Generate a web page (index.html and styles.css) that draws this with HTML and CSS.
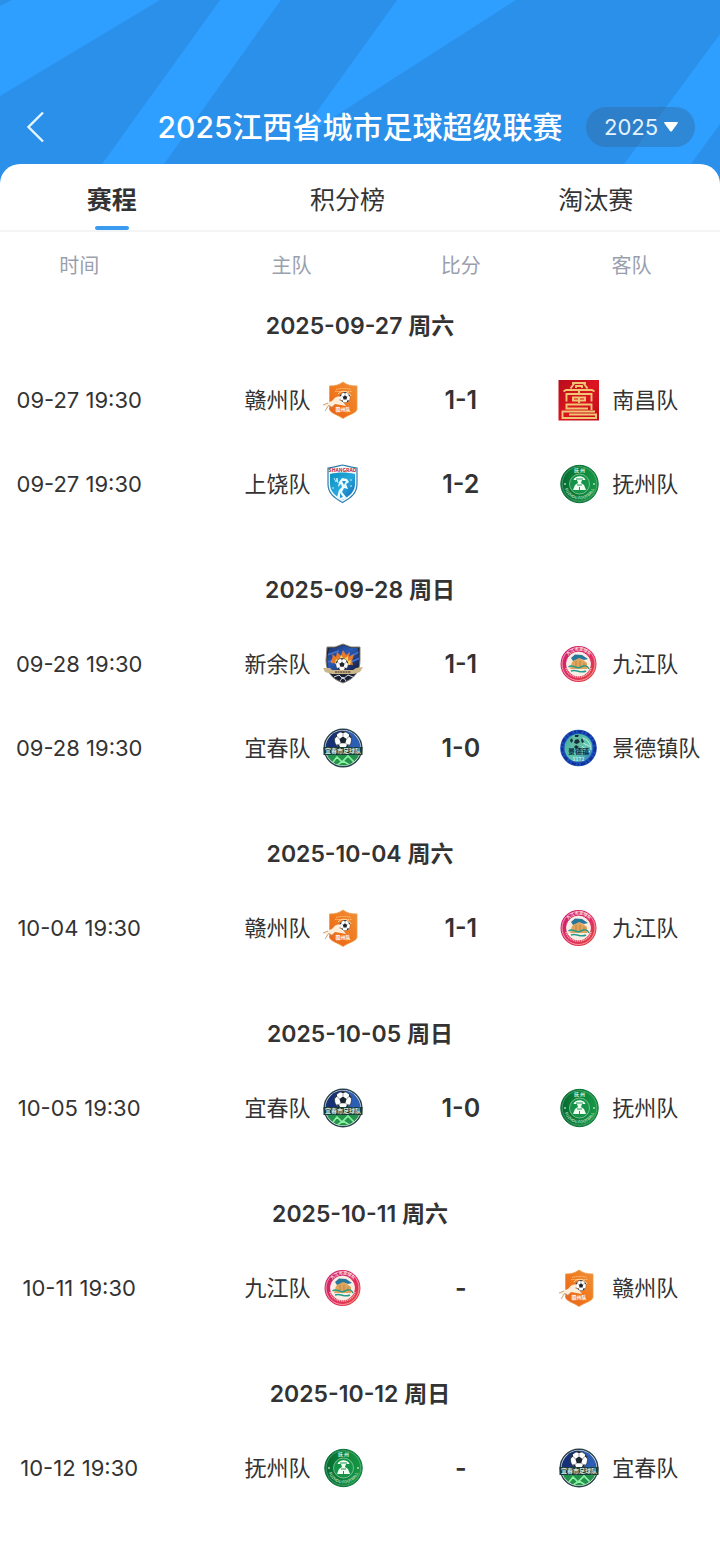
FILE: index.html
```html
<!DOCTYPE html>
<html lang="zh-CN">
<head>
<meta charset="utf-8">
<meta name="viewport" content="width=device-width, initial-scale=1">
<title>2025江西省城市足球超级联赛</title>
<link rel="stylesheet" href="styles.css">
</head>
<body>
<svg class="defs" aria-hidden="true">
  <defs>
    <linearGradient id="g-orange" x1="0" x2="1" y1="1" y2="0"><stop offset="0" stop-color="#e8601c"/><stop offset=".5" stop-color="#f07a1e"/><stop offset="1" stop-color="#f0903a"/></linearGradient>
    <linearGradient id="g-sky" x1="0" x2="1" y1="0" y2="1"><stop offset="0" stop-color="#0c8fc0"/><stop offset=".5" stop-color="#25a9dc"/><stop offset="1" stop-color="#1463b4"/></linearGradient>
    <linearGradient id="g-navy" x1="0" x2="1" y1="0" y2="1"><stop offset="0" stop-color="#1c2c5c"/><stop offset=".45" stop-color="#2a5bb8"/><stop offset="1" stop-color="#141c3a"/></linearGradient>
    <linearGradient id="g-red" x1="0" x2="1" y1="0" y2="1"><stop offset="0" stop-color="#b80d1c"/><stop offset=".5" stop-color="#dc1420"/><stop offset="1" stop-color="#c00d1a"/></linearGradient>
    <linearGradient id="g-green" x1="0" x2="1"><stop offset="0" stop-color="#056a30"/><stop offset="1" stop-color="#169a45"/></linearGradient>
    <linearGradient id="g-rose" x1="0" x2="1" y1="0" y2="1"><stop offset="0" stop-color="#c8206e"/><stop offset=".6" stop-color="#e0305c"/><stop offset="1" stop-color="#e04830"/></linearGradient>
    <linearGradient id="g-teal" x1="0" x2="1" y1="0" y2="1"><stop offset="0" stop-color="#3fa5a0"/><stop offset=".6" stop-color="#62c9b0"/><stop offset="1" stop-color="#2468b8"/></linearGradient>
    <clipPath id="c-yichun"><circle cx="21" cy="21" r="17.5"/></clipPath>
    <clipPath id="c-xinyu"><path d="M7 5 13 5 21 2 29 5 36 5 37 16C37 28 32 34 21 39 10 34 5 28 5 16Z"/></clipPath>

    <symbol id="ball" viewBox="0 0 20 20">
      <circle cx="10" cy="10" r="9.5" fill="#fff" stroke="#26303c" stroke-width=".8"/>
      <path d="M10 6 14 9 12.500 13.500H7.500L6 9ZM7 1 10 2.500 13 1 10 .3ZM1 8 3.500 6 3 3.600.8 7ZM19 8 16.500 6 17 3.600 19.200 7ZM3 15 5.500 15 7 18.700 4.500 17.500ZM17 15 14.500 15 13 18.700 15.500 17.500Z" fill="#1c2430"/>
      <path d="M10 2.500V6M3.500 6 6 9M16.500 6 14 9M5.500 15 7.500 13.500M14.500 15 12.500 13.500" stroke="#59616b" stroke-width=".7"/>
    </symbol>

    <symbol id="ganzhou" viewBox="0 0 42 42">
      <path d="M7.500 7C13 7 17 6 21 3 25 6 29 7 35 7V30C35 34 26 36 21 39.500 16 36 7.500 34 7.500 30Z" fill="url(#g-orange)" stroke="#ee9a4a" stroke-width=".8"/>
      <path d="M14 10.500C19 9 24 9 29 10.500M13 12.500H30" stroke="#ffc888" stroke-width=".8" fill="none" stroke-dasharray="1.500 .6"/>
      <use href="#ball" x="17.500" y="13" width="11" height="11"/>
      <path d="M1 27C4 22 8 24 11 21 13 18 17 16 20 19L17 21 21 23 24 27 19 26 13 25 10 28 7 26 4 32 4 27Z" fill="#fdeedb"/>
      <path d="M3 32 7 26M7 30 12 27M1 26 6 24" stroke="#a98867" stroke-width=".7"/>
      <path d="M16 15C19 11 26 11 29 17" stroke="#ffd89e" fill="none"/>
      <text x="21" y="32" class="crest-text" font-size="5" fill="#fff">赣州队</text>
    </symbol>

    <symbol id="shangrao" viewBox="0 0 42 42">
      <path d="M6 5C12 4 16 3 20.500 2 25 3 29 4 35 5V21C35 30 29 35 20.500 39.500 12 35 6 30 6 21Z" fill="#f3fafc" stroke="#2e7eae" stroke-width="1.200"/>
      <path d="M8 11C16 9 25 9 33 11V21C33 28 28 33 20.500 37 13 33 8 28 8 21Z" fill="url(#g-sky)"/>
      <text x="20.500" y="8.500" class="crest-text" font-size="5" fill="#bd2636">SHANGRAO</text>
      <path d="M17 19 20 15 25 16 27 19 24 21 26 26 22 25 20 29 25 35 20 37 15 34 17 27 20 24 19 21 16 24Z" fill="#edfaff"/>
      <path d="M20 18 24 18 22 22ZM18 30 21 34 18 35Z" fill="#2792cd"/>
      <path d="M12 15 14 19 15 15 16 20M29 16V18M29 22V24M11 24V26" stroke="#c2efff" fill="none"/>
    </symbol>

    <symbol id="xinyu" viewBox="0 0 42 42">
      <path d="M5 4 13 4 21 1 29 4 38 4 38 17C38 29 32 36 21 40 10 36 4 29 4 17Z" fill="#1b2238" stroke="#8d8778"/>
      <g clip-path="url(#c-xinyu)"><path d="M4 2H38V27H4Z" fill="url(#g-navy)"/><path d="M5 12 17 8M6 19 15 16M27 14 37 9M29 19 38 15" stroke="#4774d1" stroke-width="1.500"/></g>
      <path d="M9 20C8 17 12 16 10 11L14 14 15 9 19 13 21 7 24 12 28 9 27 14 32 11 30 18 31 22Z" fill="#e87a2b"/>
      <path d="M13 21 14 16 17 18 19 12 22 16 26 13 26 18 29 17 28 22Z" fill="#ffd45c"/>
      <use href="#ball" x="13.500" y="15" width="13" height="13"/>
      <path d="M1 25 8 25 10 27 31 27 34 25 41 24 38 29 32 31H10L3 29Z" fill="#ccb68c"/>
      <path d="M13 29H29" stroke="#665238" stroke-width="1.400" stroke-dasharray="2 .6"/>
      <path d="M12 34 17 32 21 36 26 32 31 34M18 38 21 34 24 38" stroke="#d8dce0" fill="none"/>
    </symbol>

    <symbol id="yichun" viewBox="0 0 42 42">
      <circle cx="21" cy="21" r="18.800" fill="#f4f8f7" stroke="#28414a" stroke-width="1.400"/>
      <g clip-path="url(#c-yichun)"><path d="M2 2H21V22H2Z" fill="#173176"/><path d="M21 2H40V22H21Z" fill="#2b5eb4"/><path d="M2 26H40V40H2Z" fill="#24944d"/><path d="M8 39 15 30 20 35 26 29 35 38M14 39 21 34 29 39" fill="none" stroke="#8cf0a3" stroke-width="1.600"/></g>
      <use href="#ball" x="12" y="4" width="18" height="18"/>
      <path d="M1.500 20H40.500V28H1.500Z" fill="#173c3c"/>
      <text x="21" y="26.200" class="crest-text" font-size="6" fill="#d5e6e0">宜春市足球队</text>
    </symbol>

    <symbol id="nanchang" viewBox="0 0 42 42">
      <path d="M.5 1H41V41.500H.5Z" fill="url(#g-red)"/>
      <g fill="none" stroke="#f0c674" stroke-width="1.900">
        <path d="M14 4H28M16.500 4 12.500 9.500M25.500 4 29.500 9.500M18 9V7H24V9"/>
        <path d="M5.500 12.500 8 11H34L36.500 12.500M21 11V15"/>
        <path d="M8.500 22.500V15H33.500V22.500M15 17.500V22.500M27 17.500V22.500M15 18.500H27M15 21.500H27M21 18V24"/>
        <path d="M30 29.500H8.500V25.500H33.500V31M14 29.500H25"/>
        <path d="M37 32.500H4.500V39H38V35.500H11"/>
      </g>
    </symbol>

    <symbol id="fuzhou" viewBox="0 0 42 42">
      <path id="fuzhou-arc" d="M6 21A15.500 15.500 0 0 0 37 21" fill="none"/>
      <circle cx="21.500" cy="21" r="18.700" fill="url(#g-green)" stroke="#087339"/>
      <circle cx="21.500" cy="21" r="17.300" fill="none" stroke="#83bd94" stroke-width=".5"/>
      <circle cx="21.500" cy="21" r="10" fill="#159349" stroke="#b7dec1" stroke-width=".6"/>
      <text x="21.500" y="9" class="crest-text" font-size="5" fill="#d4edda">抚 州</text>
      <text class="crest-text" font-size="4" fill="#a9d6b5"><textPath href="#fuzhou-arc" startOffset="50%">FUZHOU FOOTBALL</textPath></text>
      <path d="M15.500 17C17 12 26 12 27.500 17L24 17 23 20 26 22 28 27H15L17 22 20 20 19 17Z" fill="#effff0"/>
      <path d="M18 16H25M19 22H24M21.500 24V27" stroke="#14854a" stroke-width=".9"/>
      <path d="M7 20V22M36 20V22" stroke="#fff"/>
    </symbol>

    <symbol id="jiujiang" viewBox="0 0 42 42">
      <path id="jiujiang-arc" d="M7.500 21A13.500 13.500 0 0 1 34.500 21" fill="none"/>
      <circle cx="20.500" cy="21" r="18" fill="url(#g-rose)"/>
      <circle cx="20.500" cy="21" r="16.500" fill="none" stroke="#ffc5d2" stroke-width=".7"/>
      <text class="crest-text" font-size="4" fill="#ffe3e8"><textPath href="#jiujiang-arc" startOffset="50%">九江市足球队</textPath></text>
      <path d="M8 25C10 37 31 37 33 25" stroke="#f6a8a8" stroke-width="1.600" stroke-dasharray="1.200 .7" fill="none"/>
      <circle cx="20.500" cy="21" r="12" fill="#f9eee4" stroke="#fff" stroke-width=".7"/>
      <path d="M12 26 14 19 20 14 25 17 29 20V26Z" fill="#dfa55b"/>
      <path d="M13 15 17 11.500 24 12 30 16 26 17 21 15 15 18Z" fill="#28779a"/>
      <path d="M10.500 24C15 20 18 27 23 24S30 24 31 26M13 28C19 26 22 31 28 28" stroke="#269d8c" stroke-width="1.500" fill="none"/>
      <path d="M18 18V24M22 18V24M26 20V24" stroke="#a67842" stroke-width=".7"/>
    </symbol>

    <symbol id="jingdezhen" viewBox="0 0 42 42">
      <circle cx="20.500" cy="21" r="18.300" fill="#1a4fc0"/>
      <circle cx="20.500" cy="21" r="16.400" fill="none" stroke="#172f8c" stroke-width="2.400" stroke-dasharray="4 2 1.500 2"/>
      <circle cx="20.500" cy="21" r="14" fill="url(#g-teal)"/>
      <path d="M23 15 33 20M24 11C30 12 33 17 33 23M22 18 32 25" stroke="#bcefd9" stroke-width="1" fill="none"/>
      <circle cx="18.500" cy="15" r="7" fill="#65bca4"/>
      <path d="M17 13 20 12 22 15 19 17 16 16ZM12 13 14 11 15 14 13 16ZM17 8 21 8 20 10 17 10ZM24 11 26 15 24 16 23 13ZM16 20 18 18 21 20 18 22Z" fill="#14303b"/>
      <text x="20.500" y="26.500" class="crest-text" font-size="7" fill="#102c49">景德镇</text>
      <text x="20.500" y="33.500" class="crest-text" font-size="5" fill="#c4ecf6">1172</text>
    </symbol>
  </defs>
</svg>

<div class="page">
  <svg class="stripes" viewBox="0 0 720 184" preserveAspectRatio="none" aria-hidden="true">
    <path d="M0 0H160L0 96ZM220 0H281L164 164 150 184H88L102 164ZM397 0H516L340 113 295 142ZM720 34V124L691 164 677 184H610L624 164Z"/>
    <path class="stripe-corner" d="M0 0H12L0 6Z"/>
  </svg>
  <header class="header">
    <button class="back" aria-label="返回"><svg width="18" height="32" viewBox="0 0 18 32"><path d="M17 1.500 2.500 16 17 30.500"/></svg></button>
    <h1 class="title">2025江西省城市足球超级联赛</h1>
    <label class="year">
      <select class="year-select" aria-label="赛季"><option>2025</option></select>
      <svg class="caret" width="14" height="10" viewBox="0 0 14 10" aria-hidden="true"><path d="M1 0H13Q14.500 0 13.500 1.500L8 9Q7 10 6 9L.5 1.500Q-.5 0 1 0Z"/></svg>
    </label>
  </header>

  <main class="panel">
    <nav class="tabs">
      <button class="tab tab-active" aria-current="page">赛程</button>
      <button class="tab">积分榜</button>
      <button class="tab">淘汰赛</button>
    </nav>
    <table class="schedule">
      <colgroup><col class="col-time"><col class="col-home"><col class="col-score"><col class="col-away"></colgroup>
      <thead><tr><th class="head">时间</th><th class="head head-home">主队</th><th class="head">比分</th><th class="head head-away">客队</th></tr></thead>
      <tbody>
        <tr><th class="date" colspan="4">2025-09-27 周六</th></tr>
        <tr class="match"><td class="time">09-27 19:30</td><td><div class="team home">赣州队<svg class="crest"><use href="#ganzhou"/></svg></div></td><td class="score">1-1</td><td><div class="team away"><svg class="crest"><use href="#nanchang"/></svg>南昌队</div></td></tr>
        <tr class="match"><td class="time">09-27 19:30</td><td><div class="team home">上饶队<svg class="crest"><use href="#shangrao"/></svg></div></td><td class="score">1-2</td><td><div class="team away"><svg class="crest"><use href="#fuzhou"/></svg>抚州队</div></td></tr>
      </tbody>
      <tbody>
        <tr><th class="date" colspan="4">2025-09-28 周日</th></tr>
        <tr class="match"><td class="time">09-28 19:30</td><td><div class="team home">新余队<svg class="crest"><use href="#xinyu"/></svg></div></td><td class="score">1-1</td><td><div class="team away"><svg class="crest"><use href="#jiujiang"/></svg>九江队</div></td></tr>
        <tr class="match"><td class="time">09-28 19:30</td><td><div class="team home">宜春队<svg class="crest"><use href="#yichun"/></svg></div></td><td class="score">1-0</td><td><div class="team away"><svg class="crest"><use href="#jingdezhen"/></svg>景德镇队</div></td></tr>
      </tbody>
      <tbody>
        <tr><th class="date" colspan="4">2025-10-04 周六</th></tr>
        <tr class="match"><td class="time">10-04 19:30</td><td><div class="team home">赣州队<svg class="crest"><use href="#ganzhou"/></svg></div></td><td class="score">1-1</td><td><div class="team away"><svg class="crest"><use href="#jiujiang"/></svg>九江队</div></td></tr>
      </tbody>
      <tbody>
        <tr><th class="date" colspan="4">2025-10-05 周日</th></tr>
        <tr class="match"><td class="time">10-05 19:30</td><td><div class="team home">宜春队<svg class="crest"><use href="#yichun"/></svg></div></td><td class="score">1-0</td><td><div class="team away"><svg class="crest"><use href="#fuzhou"/></svg>抚州队</div></td></tr>
      </tbody>
      <tbody>
        <tr><th class="date" colspan="4">2025-10-11 周六</th></tr>
        <tr class="match"><td class="time">10-11 19:30</td><td><div class="team home">九江队<svg class="crest"><use href="#jiujiang"/></svg></div></td><td class="score">-</td><td><div class="team away"><svg class="crest"><use href="#ganzhou"/></svg>赣州队</div></td></tr>
      </tbody>
      <tbody>
        <tr><th class="date" colspan="4">2025-10-12 周日</th></tr>
        <tr class="match"><td class="time">10-12 19:30</td><td><div class="team home">抚州队<svg class="crest"><use href="#fuzhou"/></svg></div></td><td class="score">-</td><td><div class="team away"><svg class="crest"><use href="#yichun"/></svg>宜春队</div></td></tr>
      </tbody>
    </table>
  </main>
</div>
</body>
</html>
```
FILE: styles.css
```css
* { box-sizing: border-box; }

body {
  margin: 0;
  background: #fff;
  color: #333;
  font-family: Inter, "Noto Sans CJK SC", sans-serif;
}

button, select {
  border: 0;
  padding: 0;
  background: none;
  color: inherit;
  font: inherit;
  cursor: pointer;
}

.defs { position: absolute; width: 0; height: 0; }
.crest-text { font-family: "Noto Sans CJK SC", sans-serif; font-weight: 700; text-anchor: middle; }

.page {
  position: relative;
  min-height: 100vh;
  display: flex;
  flex-direction: column;
  background: #2b90e9;
}

.stripes {
  position: absolute;
  top: 0;
  left: 0;
  width: 100%;
  height: 184px;
  fill: #2e9eff;
}
.stripe-corner { fill: #2b90e9; }

.header {
  position: relative;
  display: grid;
  grid-template-columns: 134px 1fr 134px;
  align-items: center;
  padding: 107px 0 17px;
  color: #fff;
}

.back {
  justify-self: start;
  display: flex;
  align-items: center;
  height: 40px;
  padding: 0 26px;
}
.back path { fill: none; stroke: #e6f6ff; stroke-width: 2.4; }

.title {
  margin: 0;
  font-size: 30px;
  line-height: 40px;
  font-weight: 500;
  text-align: center;
  white-space: nowrap;
}

.year {
  position: relative;
  justify-self: end;
  width: 109px;
  height: 40px;
  margin-right: 25px;
  border-radius: 20px;
  background: rgba(51, 102, 153, .4);
}
.year-select {
  appearance: none;
  width: 100%;
  height: 40px;
  padding-left: 18px;
  color: #e4f2fd;
  font-size: 22px;
}
.caret {
  position: absolute;
  right: 17px;
  top: 15px;
  fill: #fff;
  pointer-events: none;
}

.panel {
  position: relative;
  flex: 1;
  border-radius: 20px 20px 0 0;
  background: #fff;
}

.tabs {
  display: flex;
  justify-content: space-around;
  border-bottom: 2px solid #f3f4f6;
}
.tab {
  position: relative;
  height: 66px;
  padding-top: 2px;
  font-size: 25px;
}
.tab-active { font-weight: 700; }
.tab-active::after {
  content: "";
  position: absolute;
  left: 50%;
  bottom: 0;
  width: 34px;
  height: 4px;
  margin-left: -17px;
  border-radius: 2px;
  background: #3b9bee;
}

.schedule {
  width: 100%;
  table-layout: fixed;
  border-collapse: collapse;
}
.col-time { width: 22%; }
.col-home { width: 30%; }
.col-score { width: 24%; }
.col-away { width: 24%; }

td, th { padding: 0; vertical-align: middle; }

.head {
  height: 64px;
  color: #9a9fae;
  font-size: 20px;
  font-weight: 400;
}
.head-home { padding-left: 50px; }
.head-away { padding-right: 4px; }

.date {
  height: 62px;
  padding-bottom: 6px;
  font-size: 23px;
  font-weight: 600;
}

.match td { height: 84px; white-space: nowrap; }
.match:last-child td { height: 118px; padding-bottom: 34px; }

.time { font-size: 22px; text-align: center; }
.score { font-size: 25px; font-weight: 600; text-align: center; }

.team {
  display: flex;
  align-items: center;
  gap: 12px;
  font-size: 22px;
  line-height: 40px;
}
.home { justify-content: flex-end; padding-right: 10px; }
.away { padding-left: 11px; }
.crest { flex: none; width: 42px; height: 42px; }
```
